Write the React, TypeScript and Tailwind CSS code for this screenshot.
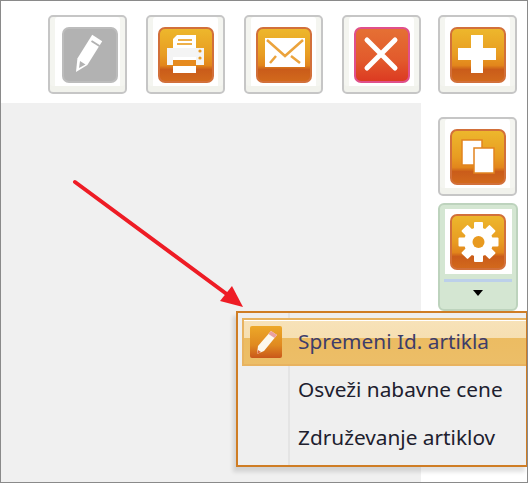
import type { ReactNode } from "react";

function Tile({ children, tone = "orange" }: { children: ReactNode; tone?: "orange" | "gray" | "red" }) {
  const tones = {
    orange: "border-[#d2703a] bg-[linear-gradient(#edb72c_0%,#e89c22_50%,#e2861c_70%,#ca5c1a_78%,#d2691c_100%)]",
    gray: "border-[#bcbcbc] bg-[#b2b2b2]",
    red: "border-[#e0508a] bg-[linear-gradient(#e57034_0%,#e25a2c_60%,#dc3a22_100%)]",
  };
  return (
    <div className={`h-[56px] w-[56px] shrink-0 rounded-[7px] border-2 blur-[0.5px] ${tones[tone]}`}>
      <svg viewBox="2 2 52 52" className="h-[52px] w-[52px]">
        {children}
      </svg>
    </div>
  );
}

function ToolButton({ children }: { children: ReactNode }) {
  return (
    <div className="flex h-[79px] w-[79px] items-center justify-center rounded-[5px] border-2 border-[#c6c6c6] bg-white shadow-[inset_0_-6px_0_#f1f2ec,inset_-5px_0_0_#f4f5f0,inset_5px_0_0_#f4f5f0]">
      {children}
    </div>
  );
}

const GEAR_ANGLES = [0, 45, 90, 135, 180, 225, 270, 315];

function MenuRow({ label }: { label: string }) {
  return <div className="flex h-[48px] items-center pl-[56px] text-[20.8px] text-[#20202e]">{label}</div>;
}

export default function App() {
  return (
    <div className="relative flex h-[483px] w-[528px] flex-col overflow-hidden border border-[#8a8a8a] bg-white font-['Noto_Sans',sans-serif]">
      <div className="flex h-[102px] shrink-0 gap-[19px] pl-[47px] pt-[14px]">
        <ToolButton>
          <div className="ml-[4px]">
            <Tile tone="gray">
              <path d="M14 45 L15.4 31.6 L30.2 7.8 L40.2 14.2 L25.4 38 Z" fill="#fff" />
              <path d="M17 41 L18 34 L23.5 37.5 Z" fill="#b2b2b2" />
              <path d="M29.5 14 L37.5 19" stroke="#b2b2b2" strokeWidth="2" />
            </Tile>
          </div>
        </ToolButton>
        <ToolButton>
          <Tile>
            <path d="M19 8 H38 V22 H15 V12 Z" fill="#fff" />
            <path d="M20 13 H34 M19 17 H34" stroke="#eeb04a" strokeWidth="2" />
            <path d="M9 21 H46 V38 H9 Z" fill="#f4f4f4" />
            <path d="M15 30 H38 V46 H15 Z" fill="#fff" />
            <rect x="15" y="33" width="23" height="6" fill="#e68a1e" />
            <circle cx="42" cy="24" r="1.6" fill="#e89a20" />
            <circle cx="42" cy="31" r="1.6" fill="#e89a20" />
          </Tile>
        </ToolButton>
        <ToolButton>
          <Tile>
            <rect x="9" y="11" width="40" height="29" fill="#fff" />
            <path d="M11 13 L29 29 L47 13 M14 36 L20 29 M44 36 L35 29" fill="none" stroke="#eba33c" strokeWidth="2.5" />
          </Tile>
        </ToolButton>
        <ToolButton>
          <Tile tone="red">
            <path d="M13 13 L41 41 M41 13 L13 41" stroke="#fff" strokeWidth="5" strokeLinecap="round" />
          </Tile>
        </ToolButton>
        <div className="-ml-[2px]">
          <ToolButton>
            <Tile>
              <path d="M21 8 H33 V21 H46 V33 H33 V46 H21 V33 H8 V21 H21 Z" fill="#fff" />
            </Tile>
          </ToolButton>
        </div>
      </div>

      <div className="flex min-h-0 flex-1">
        <div className="w-[420px] bg-[#f0f0f0]" />
        <div className="flex flex-1 flex-col items-start gap-[7px] pl-[17px] pt-[14px]">
          <ToolButton>
            <Tile>
              <rect x="12" y="11" width="20" height="25" fill="#fff" stroke="#e2841f" strokeWidth="1.5" />
              <rect x="24" y="19" width="20" height="25" fill="#fff" stroke="#e2841f" strokeWidth="1.5" />
            </Tile>
          </ToolButton>
          <div className="flex h-[108px] w-[80px] flex-col items-center rounded-[6px] border-2 border-[#bdd3bd] bg-[#d4e6d2]">
            <div className="mt-[4px] flex h-[65px] w-[67px] items-center justify-center bg-white">
              <Tile>
                <circle cx="28.5" cy="28" r="14.5" fill="#fff" />
                {GEAR_ANGLES.map((a) => (
                  <rect key={a} x="24" y="8" width="9" height="10" rx="1" fill="#fff" transform={`rotate(${a} 28.5 28)`} />
                ))}
                <circle cx="28.5" cy="28" r="6" fill="#e89a20" />
              </Tile>
            </div>
            <div className="mt-[5px] h-[3px] w-[68px] bg-[#bcd0ea]" />
            <div className="mt-[8px] h-0 w-0 border-x-[5px] border-t-[6px] border-x-transparent border-t-black" />
          </div>
        </div>
      </div>

      {/* popup menu */}
      <div className="absolute left-[235px] top-[310px] h-[156px] w-[292px] border-2 border-[#cf7d25] bg-[#efefef] pl-[4px] pt-[5px] shadow-[-3px_5px_4px_rgba(0,0,0,0.12)]">
        <div className="absolute bottom-0 left-[50px] top-0 w-[2px] bg-[#e4e4e4]" />
        <div className="relative">
          <div className="h-[48px] border-2 border-r-0 border-[#e8b360] bg-[linear-gradient(#f7e2b8_0%,#f6dfb2_40%,#ecbc62_41%,#ecbe68_100%)] shadow-[inset_0_1px_0_#fff]">
            <div className="flex h-full items-center">
              <div className="ml-[6px] h-[32px] w-[32px] rounded-[2px] bg-[linear-gradient(#eda828_0%,#e08a20_60%,#c9571a_100%)] blur-[0.4px]">
                <svg viewBox="0 0 32 32" className="h-[32px] w-[32px]">
                  <path d="M21 5 L27 9 L14 25 L7 28 L8 20 Z" fill="#fdf8ec" />
                  <path d="M21 5 L27 9 L24.5 12 L18.5 8 Z" fill="#e9a0a0" />
                  <path d="M7 28 L8 24 L11 26 Z" fill="#d9663a" />
                </svg>
              </div>
              <span className="ml-[16px] text-[20.8px] text-[#3d3d6b]">Spremeni Id. artikla</span>
            </div>
          </div>
          <MenuRow label="Osveži nabavne cene" />
          <MenuRow label="Združevanje artiklov" />
        </div>
      </div>

      {/* annotation arrow */}
      <svg className="absolute -left-px -top-px h-[483px] w-[528px]" viewBox="0 0 528 483" fill="none">
        <path d="M75 182 L228 295" stroke="#ee1c25" strokeWidth="4" strokeLinecap="round" />
        <path d="M243 307 L220 301 L232 286 Z" fill="#ee1c25" />
      </svg>
    </div>
  );
}
